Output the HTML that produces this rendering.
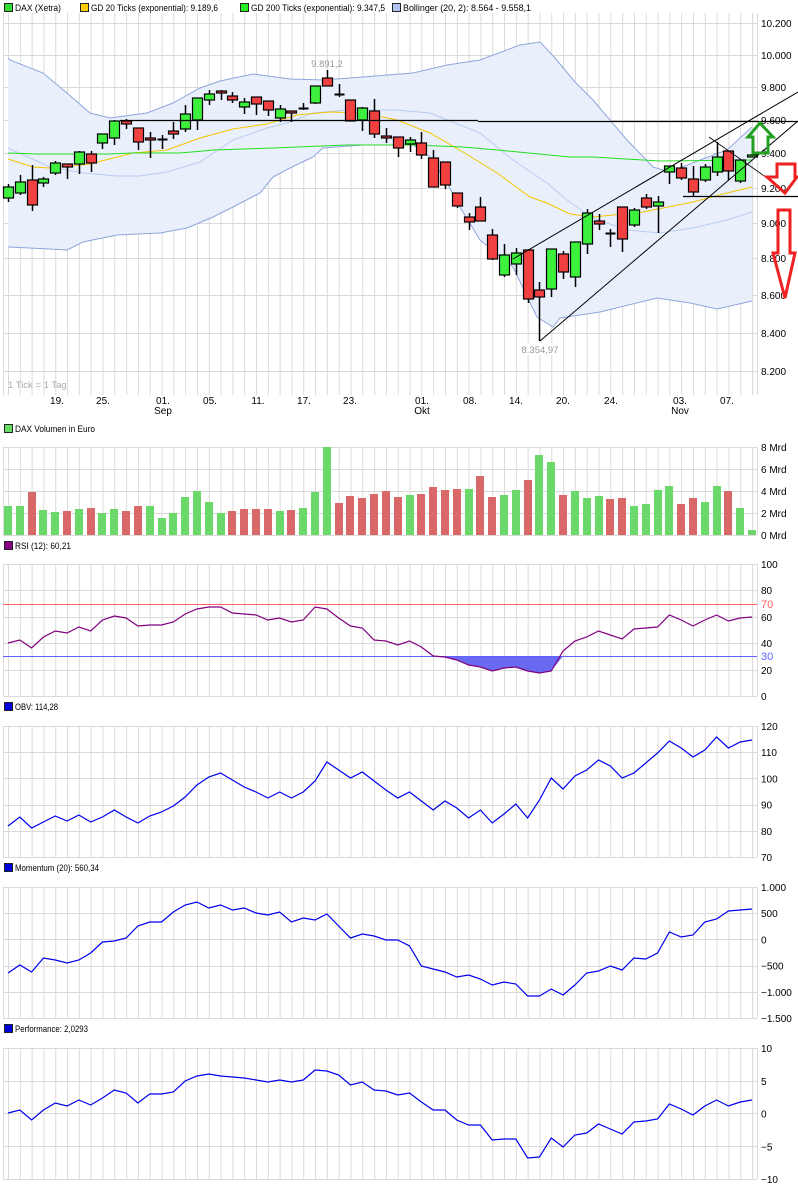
<!DOCTYPE html>
<html><head><meta charset="utf-8">
<style>
html,body{margin:0;padding:0;background:#fff;}
svg{display:block;font-family:"Liberation Sans","DejaVu Sans",sans-serif;}
</style></head>
<body>
<svg id="s" width="798" height="1189" xmlns="http://www.w3.org/2000/svg"></svg>
<script>
const S=document.getElementById('s');let h='';
const X=i=>8+i*11.81;
const N=64;
function txt(x,y,t,o){o=o||{};h+=`<text x="${x}" y="${y}" font-size="${o.fs||10}" fill="${o.c||'#000'}" text-anchor="${o.a||'start'}"${o.tl?` textLength="${o.tl}" lengthAdjust="spacingAndGlyphs"`:''}>${t}</text>`;}
function line(x1,y1,x2,y2,c,w){h+=`<line x1="${x1}" y1="${y1}" x2="${x2}" y2="${y2}" stroke="${c}" stroke-width="${w||1}"/>`;}
function poly(pts,c,w,f){h+=`<polyline points="${pts.map(p=>p.join(',')).join(' ')}" fill="${f||'none'}" stroke="${c}" stroke-width="${w||1}"/>`;}
function sq(x,y,c){h+=`<rect x="${x+0.5}" y="${y+0.5}" width="8" height="8" fill="${c}" stroke="#222"/>`;}
function panel(top,bot,hl){
  h+=`<rect x="3" y="${top}" width="754" height="${bot-top}" fill="#fff"/>`;
  for(let i=0;i<N;i++) line(X(i)+.5,top,X(i)+.5,bot,'#dadada');
  hl.forEach(y=>line(3,y+.5,757,y+.5,'#dadada'));
  line(3.5,top,3.5,bot,'#dadada');line(757.5,top,757.5,bot,'#dadada');
}
// legend
sq(4,3,'#33dd33');txt(15,11,'DAX (Xetra)',{fs:9.5,tl:46});
sq(80,3,'#ffcc00');txt(91,11,'GD 20 Ticks (exponential): 9.189,6',{fs:9.5,tl:127});
sq(240,3,'#22ee22');txt(251,11,'GD 200 Ticks (exponential): 9.347,5',{fs:9.5,tl:134});
sq(392,3,'#b0c4ee');txt(403,11,'Bollinger (20, 2): 8.564 - 9.558,1',{fs:9.5,tl:128});
// main
const py=p=>87+1593*Math.log(9.8/p);
const prices=[10.2,10,9.8,9.6,9.4,9.2,9,8.8,8.6,8.4,8.2];
panel(13,395,prices.map(p=>Math.round(py(p))));
prices.forEach(p=>txt(761,Math.round(py(p))+4,p.toFixed(3),{}));
// bollinger
const up=[[8,58],[10,60],[43,73],[67,93],[90,113],[110,118],[147,113],[173,103],[200,88],[220,81],[253,74],[290,79],[323,80],[363,77],[413,73],[430,69],[447,65],[480,60],[520,45],[540,42],[555,58],[575,82],[593,100],[627,140],[653,167],[670,172],[700,160],[727,150],[752,127]];
const lo=[[8,247],[50,249],[67,250],[83,242],[117,235],[160,233],[187,228],[213,217],[233,207],[260,193],[273,177],[290,168],[313,157],[323,148],[363,145],[413,145],[430,157],[447,183],[460,207],[480,240],[513,267],[537,317],[553,327],[560,318],[600,312],[657,298],[690,303],[717,309],[752,301]];
h+=`<polygon points="${up.concat(lo.slice().reverse()).map(p=>p.join(',')).join(' ')}" fill="#e9f0fb"/>`;
poly(up,'#8ea6dc');poly(lo,'#8ea6dc');
poly([[8,148],[50,167],[83,173],[117,176],[140,176],[167,172],[200,162],[233,140],[267,128],[290,122],[313,113],[347,110],[397,110],[430,113],[480,133],[513,160],[547,183],[567,200],[593,218],[627,230],[660,233],[693,228],[727,220],[752,212]],'#b8ccf2');
poly([[8,159],[33,167],[50,168],[90,164],[133,153],[167,150],[200,138],[233,129],[267,124],[297,115],[330,112],[363,113],[397,120],[430,133],[463,152],[497,173],[530,197],[547,203],[570,214],[593,217],[643,212],[693,202],[727,193],[752,187]],'#f5c400');
poly([[8,153],[37,154],[107,154],[133,153],[180,153],[203,151],[213,150],[273,148],[347,145],[413,145],[463,147],[497,150],[570,157],[593,157],[660,161],[752,160]],'#22dd22');
const C=[[187,198,184,202,'g'],[182,193,175,195,'g'],[180,205,165,211,'r'],[179,183,177,187,'g'],[163,173,161,175,'g'],[164,167,164,179,'r'],[152,164,151,174,'g'],[154,163,151,172,'r'],[134,143,134,149,'g'],[121,138,120,145,'g'],[121,124,119,129,'r'],[128,142,128,150,'r'],[138,140,132,158,'r'],[139,139,135,149,'d'],[131,134,122,139,'r'],[114,129,105,132,'g'],[98,120,98,130,'g'],[94,100,90,105,'g'],[91,93,90,100,'r'],[96,100,92,103,'r'],[102,107,98,114,'g'],[97,104,97,115,'r'],[101,110,101,116,'r'],[109,118,105,122,'g'],[111,113,111,122,'r'],[108,108,103,110,'d'],[86,103,86,104,'g'],[78,86,70,86,'r'],[94,94,84,97,'d'],[100,121,100,121,'r'],[108,120,107,131,'g'],[111,134,99,138,'r'],[136,137,128,143,'r'],[137,148,137,157,'r'],[140,144,137,152,'g'],[143,155,132,159,'r'],[158,187,150,187,'r'],[162,185,162,189,'r'],[193,206,193,208,'r'],[217,222,213,230,'r'],[207,221,197,221,'r'],[235,259,229,260,'r'],[255,275,244,277,'g'],[253,264,248,275,'g'],[250,299,249,303,'r'],[290,297,282,341,'r'],[249,289,249,297,'g'],[254,272,251,279,'r'],[242,277,242,287,'g'],[213,244,209,254,'g'],[221,224,214,230,'r'],[233,233,229,247,'d'],[207,239,207,252,'r'],[210,225,208,227,'g'],[198,207,194,209,'r'],[202,206,196,233,'g'],[166,172,166,184,'g'],[168,178,163,180,'r'],[179,192,166,196,'r'],[167,180,164,182,'g'],[157,172,142,176,'g'],[151,171,151,180,'r'],[160,181,160,183,'g'],[155,157,153,157,'g']];
C.forEach((c,i)=>{const x=Math.round(X(i))+.5;
  line(x,c[2],x,c[3],'#000',1.5);
  if(c[4]=='d'){line(x-5,c[0]+.5,x+5,c[0]+.5,'#000',2);}
  else h+=`<rect x="${x-5}" y="${c[0]}" width="10" height="${Math.max(2,c[1]-c[0])}" fill="${c[4]=='g'?'#3cf03c':'#f04040'}" stroke="#000" stroke-width="1.2"/>`;
});
line(120,120.5,478,120.5,'#000',1.2);line(478,121.5,798,121.5,'#000',1.2);
line(683,196.5,798,196.5,'#000',1.2);
line(513,259,798,92,'#000',1);line(540,341,798,121,'#000',1);
line(709,137,767,178,'#000',0.8);
h+=`<polygon points="760,123 773,137 768,137 768,153 753,153 753,137 748,137" fill="none" stroke="#22a022" stroke-width="3"/>`;
h+=`<polygon points="777,164 795,164 795,177 797,177 785,193 767,177 777,177" fill="none" stroke="#ee2222" stroke-width="3"/>`;
h+=`<polygon points="778,210 790,210 790,253 795,253 785,298 773,253 778,253" fill="none" stroke="#ee2222" stroke-width="3"/>`;
txt(327,67,'9.891,2',{fs:9.5,c:'#999',a:'middle'});
h+=`<rect x="519" y="343" width="42" height="12" fill="#fff"/>`;
txt(540,353,'8.354,97',{fs:9.5,c:'#999',a:'middle'});
txt(8,388,'1 Tick = 1 Tag',{fs:9.5,c:'#aaa'});
[['19.',57],['25.',103],['01.',163],['05.',210],['11.',258],['17.',304],['23.',350],['01.',422],['08.',470],['14.',516],['20.',563],['24.',611],['03.',680],['07.',727]].forEach(d=>txt(d[1],404,d[0],{a:'middle'}));
txt(163,414,'Sep',{a:'middle'});txt(422,414,'Okt',{a:'middle'});txt(680,414,'Nov',{a:'middle'});
sq(4,424,'#66dd66');txt(15,432,'DAX Volumen in Euro',{fs:9.5,tl:80});
panel(447,535,[447,469,491,513,535]);
['8 Mrd','6 Mrd','4 Mrd','2 Mrd','0 Mrd'].forEach((t,k)=>txt(761,451+22*k,t));
const V=[[506,'g'],[506,'g'],[492,'r'],[510,'g'],[512,'g'],[511,'r'],[509,'g'],[508,'r'],[513,'g'],[509,'g'],[511,'r'],[506,'r'],[506,'g'],[518,'g'],[513,'g'],[497,'g'],[491,'g'],[502,'g'],[513,'g'],[511,'r'],[509,'r'],[509,'r'],[509,'r'],[511,'g'],[510,'r'],[508,'g'],[492,'g'],[447,'g'],[503,'r'],[496,'r'],[498,'r'],[494,'r'],[491,'r'],[497,'r'],[495,'g'],[494,'r'],[487,'r'],[490,'r'],[489,'r'],[489,'g'],[476,'r'],[497,'r'],[495,'g'],[490,'g'],[480,'r'],[455,'g'],[462,'g'],[495,'r'],[491,'g'],[498,'g'],[496,'g'],[499,'r'],[498,'r'],[506,'g'],[504,'g'],[490,'g'],[486,'g'],[504,'r'],[498,'r'],[502,'g'],[486,'g'],[491,'r'],[508,'g'],[530,'g']];
V.forEach((v,i)=>{const x=Math.round(X(i));h+=`<rect x="${x-4}" y="${v[0]}" width="8" height="${535-v[0]}" fill="${v[1]=='g'?'#6ad96a':'#d96868'}"/>`;});
sq(4,541,'#880088');txt(15,549,'RSI (12): 60,21',{fs:9.5,tl:56});
panel(564,696,[564,590,617,643,670,696]);
const R=[643,640,648,637,631,633,627,631,620,616,618,626,625,625,622,614,609,607,607,613,614,615,620,618,622,620,607,609,618,626,628,640,641,645,641,647,656,657,660,665,667,671,668,667,671,673,671,651,641,637,631,635,639,629,628,627,615,620,626,620,615,621,618,617];
const Rp=R.map((y,i)=>[X(i),y]);
let fp=[[X(35),656]];for(let i=36;i<=47;i++)fp.push([X(i),Math.max(656,R[i])]);fp.push([X(47),656]);
h+=`<polygon points="${fp.map(p=>p.join(',')).join(' ')}" fill="#6a6af0"/>`;
line(3,604.5,757,604.5,'#ff6060');line(3,656.5,757,656.5,'#6060ff');
poly(Rp,'#800080',1.2);
[['100',568],['80',594],['60',621],['40',647],['20',674],['0',700]].forEach(t=>txt(761,t[1],t[0]));
txt(761,608,'70',{fs:11,c:'#ff6060'});txt(761,660,'30',{fs:11,c:'#6060ff'});
sq(4,702,'#0000dd');txt(15,710,'OBV: 114,28',{fs:9.5,tl:43});
const g5=t=>[0,1,2,3,4,5].map(k=>Math.round(t+26.2*k));
panel(726,857,g5(726));
['120','110','100','90','80','70'].forEach((t,k)=>txt(761,730+26.2*k,t));
const O=[826,817,828,822,816,821,815,822,817,810,817,823,816,812,806,797,785,777,773,780,787,792,798,792,798,792,781,762,770,778,772,781,790,798,792,801,810,801,808,818,810,823,814,804,818,800,778,789,776,770,760,766,778,773,763,753,741,748,757,750,737,748,742,740];
poly(O.map((y,i)=>[X(i),y]),'#0000ee',1.2);
sq(4,863,'#0000dd');txt(15,871,'Momentum (20): 560,34',{fs:9.5,tl:84});
panel(887,1018,g5(887));
['1.000','500','0','\u2212500','\u22121.000','\u22121.500'].forEach((t,k)=>txt(761,891+26.2*k,t));
const M=[973,965,972,958,960,963,960,953,942,941,938,926,922,922,912,905,902,908,905,910,908,913,915,912,922,918,920,914,926,938,934,936,940,940,946,966,969,972,977,975,979,985,982,984,996,996,989,995,985,973,971,966,970,958,959,953,932,937,935,922,919,911,910,909];
poly(M.map((y,i)=>[X(i),y]),'#0000ee',1.2);
sq(4,1024,'#0000dd');txt(15,1032,'Performance: 2,0293',{fs:9.5,tl:73});
panel(1048,1179,[1048,1081,1113,1146,1179]);
['10','5','0','\u22125','\u221210'].forEach((t,k)=>txt(761,1052+32.75*k,t));
const P=[1113,1110,1120,1110,1103,1106,1100,1105,1098,1090,1093,1103,1094,1094,1092,1081,1076,1074,1076,1077,1078,1080,1082,1080,1082,1080,1070,1071,1075,1085,1082,1090,1091,1095,1093,1102,1110,1110,1120,1125,1125,1140,1139,1139,1158,1157,1138,1147,1135,1133,1124,1129,1134,1122,1121,1119,1104,1109,1115,1106,1100,1106,1102,1100];
poly(P.map((y,i)=>[X(i),y]),'#0000ee',1.2);
S.innerHTML=h;
</script>
</body></html>
